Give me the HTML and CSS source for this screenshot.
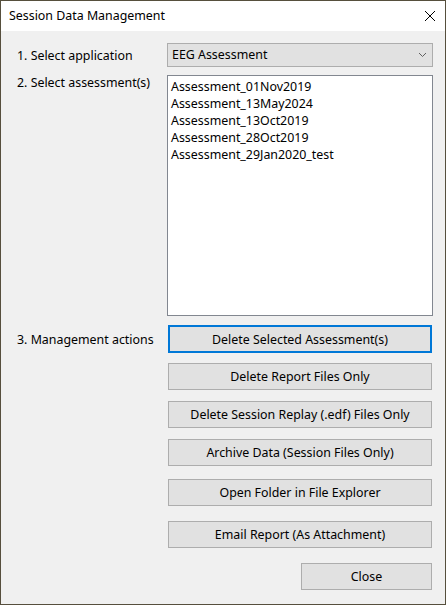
FILE: index.html
```html
<!DOCTYPE html>
<html lang="en">
<head>
<meta charset="utf-8">
<title>Session Data Management</title>
<link rel="stylesheet" href="styles.css">
</head>
<body>
<div class="window">
  <div class="titlebar">
    <span class="title">Session Data Management</span>
    <svg class="close-x" width="12" height="12" viewBox="0 0 12 12"><path d="M1 1 L11 11 M11 1 L1 11" stroke="#000" stroke-width="1" fill="none"/></svg>
  </div>
  <div class="content">
    <div class="label label-mid">1. Select application</div>
    <div class="combo">
      <span class="combo-text">EEG Assessment</span>
      <svg class="chevron" width="9" height="6" viewBox="0 0 9 6"><path d="M1 1 L4.5 4.5 L8 1" stroke="#606060" stroke-width="1" fill="none"/></svg>
    </div>
    <div class="label label-top">2. Select assessment(s)</div>
    <div class="listbox">
      <div class="item">Assessment_01Nov2019</div>
      <div class="item">Assessment_13May2024</div>
      <div class="item">Assessment_13Oct2019</div>
      <div class="item">Assessment_28Oct2019</div>
      <div class="item">Assessment_29Jan2020_test</div>
    </div>
    <div class="label label-actions">3. Management actions</div>
    <div class="actions">
      <button class="btn btn-focus">Delete Selected Assessment(s)</button>
      <button class="btn gap-10">Delete Report Files Only</button>
      <button class="btn gap-11">Delete Session Replay (.edf) Files Only</button>
      <button class="btn gap-11">Archive Data (Session Files Only)</button>
      <button class="btn gap-13">Open Folder in File Explorer</button>
      <button class="btn gap-15">Email Report (As Attachment)</button>
    </div>
    <div class="footer">
      <button class="btn btn-close">Close</button>
    </div>
  </div>
</div>
</body>
</html>
```
FILE: styles.css
```css
html, body {
  margin: 0;
  padding: 0;
}
body {
  font-family: "Noto Sans", "Open Sans", sans-serif;
  font-size: 12.4px;
  color: #000;
  background: #f0f0f0;
}
.window {
  width: 446px;
  height: 605px;
  box-sizing: border-box;
  border: 1px solid #564f3d;
  background: #f0f0f0;
  display: flex;
  flex-direction: column;
}
.titlebar {
  height: 30px;
  background: #fff;
  display: flex;
  align-items: center;
  justify-content: space-between;
  padding: 0 8px 0 8px;
}
.title {
  line-height: 16px;
}
.close-x {
  margin-right: 1px;
  display: block;
}
.content {
  display: grid;
  grid-template-columns: 150px 266px;
  padding: 12px 0 0 16px;
  align-items: start;
}
.label {
  line-height: 15px;
  white-space: nowrap;
}
.label-mid {
  align-self: center;
}
.label-top {
  margin-top: 8px;
}
.combo {
  height: 24px;
  box-sizing: border-box;
  border: 1px solid #adadad;
  background: #e1e1e1;
  display: flex;
  align-items: center;
  justify-content: space-between;
  padding: 0 4px 0 4px;
}
.combo-text {
  line-height: 16px;
}
.chevron {
  display: block;
  margin-right: 1px;
}
.listbox {
  margin-top: 8px;
  height: 241px;
  box-sizing: border-box;
  border: 1px solid #828790;
  background: #fff;
  padding: 2px 3px;
}
.item {
  line-height: 17px;
  white-space: nowrap;
}
.label-actions {
  margin-top: 16px;
}
.actions {
  margin-top: 9px;
  padding-left: 1px;
  display: flex;
  flex-direction: column;
}
.btn {
  font-family: inherit;
  font-size: 12.4px;
  color: #000;
  height: 27px;
  box-sizing: border-box;
  border: 1px solid #adadad;
  background: #e1e1e1;
  padding: 0;
  margin: 0;
  width: 264px;
  display: block;
}
.btn-focus {
  border: 2px solid #0078d7;
  height: 28px;
}
.gap-10 { margin-top: 10px; }
.gap-11 { margin-top: 11px; }
.gap-13 { margin-top: 13px; }
.gap-15 { margin-top: 15px; }
.footer {
  grid-column: 1 / 3;
  display: flex;
  justify-content: flex-end;
  padding-right: 1px;
  margin-top: 15px;
}
.btn-close {
  width: 131px;
}
```
